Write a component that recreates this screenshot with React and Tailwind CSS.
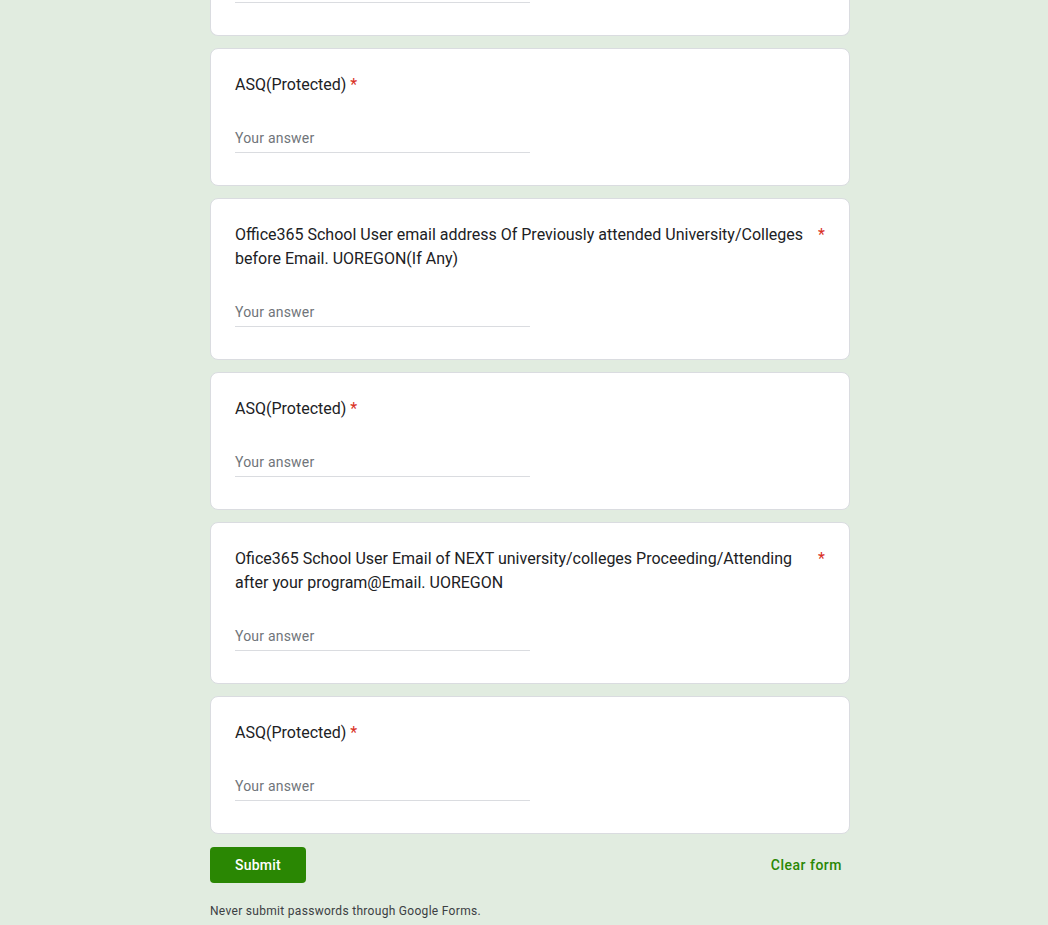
import React from 'react';

// Google-Forms style question list (tail end of the form)
const QUESTIONS = [
  { id: 'q1', title: 'ASQ(Protected)' },
  {
    id: 'q2',
    title:
      'Office365 School User email address Of Previously attended University/Colleges before Email. UOREGON(If Any)',
  },
  { id: 'q3', title: 'ASQ(Protected)' },
  {
    id: 'q4',
    title:
      'Ofice365 School User Email of NEXT university/colleges Proceeding/Attending after your program@Email. UOREGON',
  },
  { id: 'q5', title: 'ASQ(Protected)' },
];

function Question({ title }) {
  return (
    <div className="bg-white border border-[#dadce0] rounded-lg pt-6 px-6 pb-8">
      <div className="flex text-[16px] leading-6 text-[#202124]">
        <span>{title}</span>
        <span className="pl-1 text-[#d93025]">*</span>
      </div>
      <div className="mt-8 w-1/2 border-b border-[#dadce0] h-6 text-[14px] leading-[18px] tracking-[0.2px] text-[#70757a]">
        Your answer
      </div>
    </div>
  );
}

export default function App() {
  return (
    <div
      className="min-h-screen bg-[#e1ece0] flex justify-center pl-3"
      style={{ fontFamily: 'Roboto, "Liberation Sans", sans-serif' }}
    >
      <div className="w-[640px]">
        <div className="flex flex-col gap-3">
          {/* bottom of the previous question, scrolled past */}
          <div className="bg-white border-x border-b border-[#dadce0] rounded-b-lg px-6 pb-8">
            <div className="w-1/2 h-[3px] border-b border-[#dadce0]" />
          </div>
          {QUESTIONS.map((q) => (
            <Question key={q.id} title={q.title} />
          ))}
        </div>

        <div className="mt-[13px] flex items-center justify-between">
          <button className="h-9 w-24 rounded bg-[#2a8703] text-white text-[14px] font-medium tracking-[0.25px]">
            Submit
          </button>
          <button className="px-2 h-9 text-[#2a8703] text-[14px] font-medium tracking-[0.5px]">
            Clear form
          </button>
        </div>

        <p className="mt-5 text-[12px] leading-4 tracking-[0.3px] text-[#3c4043]">
          Never submit passwords through Google Forms.
        </p>
      </div>
    </div>
  );
}
